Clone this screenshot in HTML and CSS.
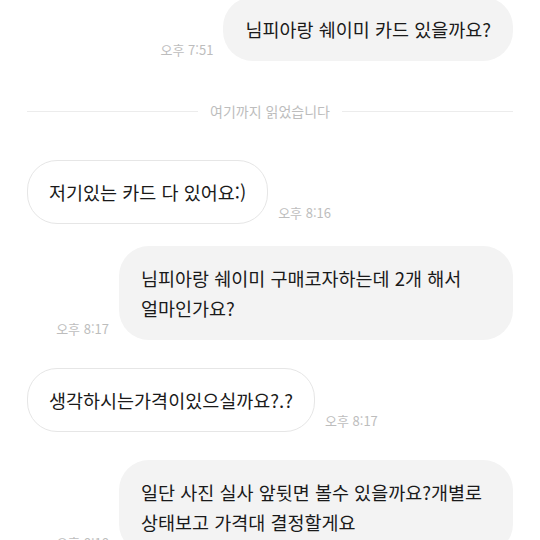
FILE: index.html
```html
<!DOCTYPE html>
<html lang="ko">
<head>
  <meta charset="UTF-8">
  <meta name="viewport" content="width=device-width, initial-scale=1.0">
  <title>채팅</title>
  <link rel="stylesheet" href="styles.css">
</head>
<body>
  <div class="chat">
    <div class="row row-sent">
      <span class="time">오후 7:51</span>
      <div class="bubble bubble-sent">님피아랑 쉐이미 카드 있을까요?</div>
    </div>

    <div class="divider">
      <span class="divider-line"></span>
      <span class="divider-text">여기까지 읽었습니다</span>
      <span class="divider-line"></span>
    </div>

    <div class="row row-received">
      <div class="bubble bubble-received">저기있는 카드 다 있어요:)</div>
      <span class="time">오후 8:16</span>
    </div>

    <div class="row row-sent row-close">
      <span class="time">오후 8:17</span>
      <div class="bubble bubble-sent">님피아랑 쉐이미 구매코자하는데 2개 해서 얼마인가요?</div>
    </div>

    <div class="row row-received">
      <div class="bubble bubble-received">생각하시는가격이있으실까요?.?</div>
      <span class="time">오후 8:17</span>
    </div>

    <div class="row row-sent">
      <span class="time">오후 8:18</span>
      <div class="bubble bubble-sent">일단 사진 실사 앞뒷면 볼수 있을까요?개별로 상태보고 가격대 결정할게요</div>
    </div>
  </div>
</body>
</html>
```

FILE: styles.css
```css
body {
  font-family: "Noto Sans CJK KR", "Noto Sans", sans-serif;
  background-color: #fff;
  color: #1a1a1a;
  margin: 0;
  overflow: hidden;
}

.chat {
  display: flex;
  flex-direction: column;
  padding: 0 27px;
  margin-top: -3px;
}

.row {
  display: flex;
  align-items: flex-end;
  gap: 10px;
  margin-top: 28px;
}

.row:first-child {
  margin-top: 0;
}

.row-close {
  margin-top: 22px;
}

.row-sent {
  justify-content: flex-end;
}

.row-received {
  justify-content: flex-start;
}

.bubble {
  box-sizing: border-box;
  max-width: 394px;
  padding: 17px 22px;
  border-radius: 30px;
  font-size: 18.5px;
  line-height: 30px;
  word-break: keep-all;
}

.bubble-sent {
  background-color: #f3f3f3;
}

.bubble-received {
  background-color: #fff;
  border: 1px solid #e6e6e6;
  padding: 16px 21px;
}

.time {
  flex-shrink: 0;
  font-size: 13px;
  line-height: 16px;
  color: #bdbdbd;
  margin-bottom: 3px;
}

.divider {
  display: flex;
  align-items: center;
  gap: 12px;
  height: 20px;
  margin: 40px 0 11px;
}

.divider-line {
  flex: 1;
  height: 1px;
  background-color: #ececec;
}

.divider-text {
  font-size: 14px;
  color: #bdbdbd;
}
```
